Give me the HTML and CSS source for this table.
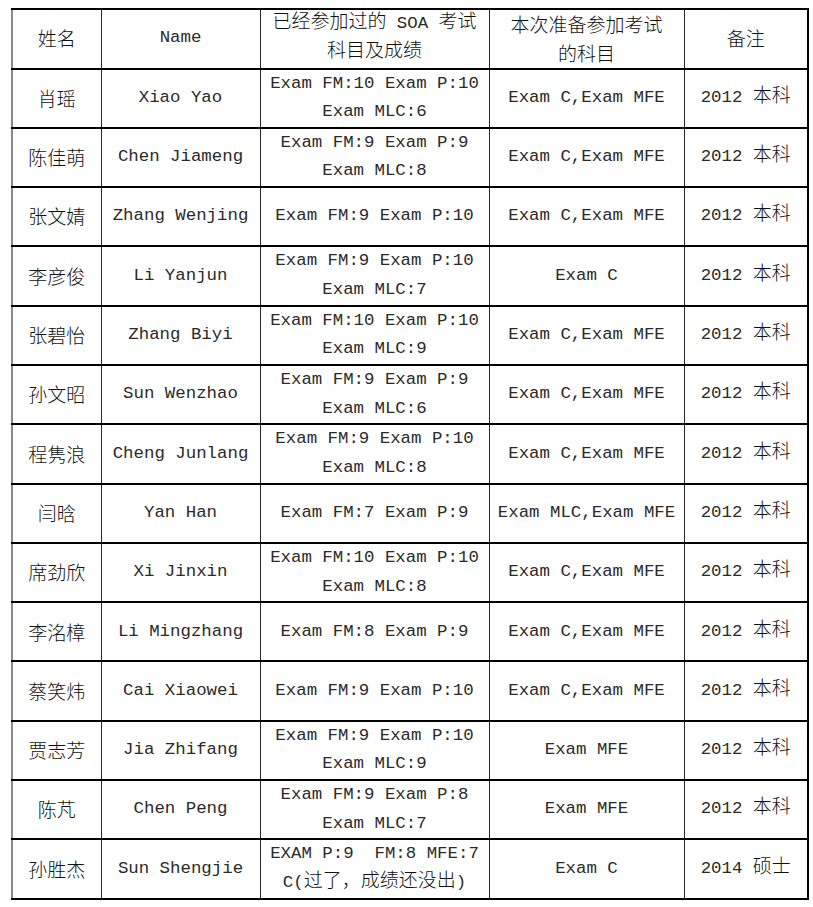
FILE: index.html
```html
<!DOCTYPE html>
<html lang="zh">
<head>
<meta charset="utf-8">
<title>SOA 考试</title>
<link rel="stylesheet" href="styles.css">
</head>
<body>
<table class="grid">
  <colgroup>
    <col class="c1"><col class="c2"><col class="c3"><col class="c4"><col class="c5">
  </colgroup>
  <thead>
    <tr class="head">
      <th class="zh">姓名</th>
      <th>Name</th>
      <th><span class="zh">已经参加过的</span> SOA <span class="zh">考试<br>科目及成绩</span></th>
      <th class="zh">本次准备参加考试<br>的科目</th>
      <th class="zh">备注</th>
    </tr>
  </thead>
  <tbody>
    <tr><td class="zh">肖瑶</td><td>Xiao Yao</td><td>Exam FM:10 Exam P:10<br>Exam MLC:6</td><td>Exam C,Exam MFE</td><td>2012 <span class="zh">本科</span></td></tr>
    <tr><td class="zh">陈佳萌</td><td>Chen Jiameng</td><td>Exam FM:9 Exam P:9<br>Exam MLC:8</td><td>Exam C,Exam MFE</td><td>2012 <span class="zh">本科</span></td></tr>
    <tr><td class="zh">张文婧</td><td>Zhang Wenjing</td><td>Exam FM:9 Exam P:10</td><td>Exam C,Exam MFE</td><td>2012 <span class="zh">本科</span></td></tr>
    <tr><td class="zh">李彦俊</td><td>Li Yanjun</td><td>Exam FM:9 Exam P:10<br>Exam MLC:7</td><td>Exam C</td><td>2012 <span class="zh">本科</span></td></tr>
    <tr><td class="zh">张碧怡</td><td>Zhang Biyi</td><td>Exam FM:10 Exam P:10<br>Exam MLC:9</td><td>Exam C,Exam MFE</td><td>2012 <span class="zh">本科</span></td></tr>
    <tr><td class="zh">孙文昭</td><td>Sun Wenzhao</td><td>Exam FM:9 Exam P:9<br>Exam MLC:6</td><td>Exam C,Exam MFE</td><td>2012 <span class="zh">本科</span></td></tr>
    <tr><td class="zh">程隽浪</td><td>Cheng Junlang</td><td>Exam FM:9 Exam P:10<br>Exam MLC:8</td><td>Exam C,Exam MFE</td><td>2012 <span class="zh">本科</span></td></tr>
    <tr><td class="zh">闫晗</td><td>Yan Han</td><td>Exam FM:7 Exam P:9</td><td>Exam MLC,Exam MFE</td><td>2012 <span class="zh">本科</span></td></tr>
    <tr><td class="zh">席劲欣</td><td>Xi Jinxin</td><td>Exam FM:10 Exam P:10<br>Exam MLC:8</td><td>Exam C,Exam MFE</td><td>2012 <span class="zh">本科</span></td></tr>
    <tr><td class="zh">李洺樟</td><td>Li Mingzhang</td><td>Exam FM:8 Exam P:9</td><td>Exam C,Exam MFE</td><td>2012 <span class="zh">本科</span></td></tr>
    <tr><td class="zh">蔡笑炜</td><td>Cai Xiaowei</td><td>Exam FM:9 Exam P:10</td><td>Exam C,Exam MFE</td><td>2012 <span class="zh">本科</span></td></tr>
    <tr><td class="zh">贾志芳</td><td>Jia Zhifang</td><td>Exam FM:9 Exam P:10<br>Exam MLC:9</td><td>Exam MFE</td><td>2012 <span class="zh">本科</span></td></tr>
    <tr><td class="zh">陈芃</td><td>Chen Peng</td><td>Exam FM:9 Exam P:8<br>Exam MLC:7</td><td>Exam MFE</td><td>2012 <span class="zh">本科</span></td></tr>
    <tr><td class="zh">孙胜杰</td><td>Sun Shengjie</td><td>EXAM P:9&nbsp; FM:8 MFE:7<br>C(<span class="zh">过了，成绩还没出</span>)</td><td>Exam C</td><td>2014 <span class="zh">硕士</span></td></tr>
  </tbody>
</table>
</body>
</html>
```

FILE: styles.css
```css
html, body {
  margin: 0;
  padding: 0;
  background: #ffffff;
}

body {
  padding: 8px 0 0 11px;
}

.grid {
  border-collapse: collapse;
  table-layout: fixed;
  width: 796px;
  font-family: "Liberation Mono", "Noto Sans CJK SC", monospace;
  font-size: 17.4px;
  color: #2a2a2a;
}

.c1 { width: 89px; }
.c2 { width: 159px; }
.c3 { width: 229px; }
.c4 { width: 195px; }
.c5 { width: 124px; }

.grid th,
.grid td {
  font-weight: normal;
  text-align: center;
  vertical-align: middle;
  padding: 0;
  line-height: 28.6px;
  border-top: 2px solid #000;
  border-bottom: 2px solid #000;
  border-left: 1px solid #2a2a2a;
  border-right: 1px solid #2a2a2a;
  white-space: nowrap;
}

.grid tr > :first-child {
  border-left: 2px solid #8a8a8a;
}

.grid tr > :last-child {
  border-right: 2px solid #000;
}

.head {
  height: 59.5px;
}

.grid tbody tr {
  height: 59.3px;
}

.zh {
  font-family: "Noto Sans CJK SC", sans-serif;
  font-size: 19px;
  font-weight: 300;
  color: #111;
}

.grid th.zh,
.grid td.zh {
  font-weight: 300;
}

span.zh {
  line-height: 0;
}
```
